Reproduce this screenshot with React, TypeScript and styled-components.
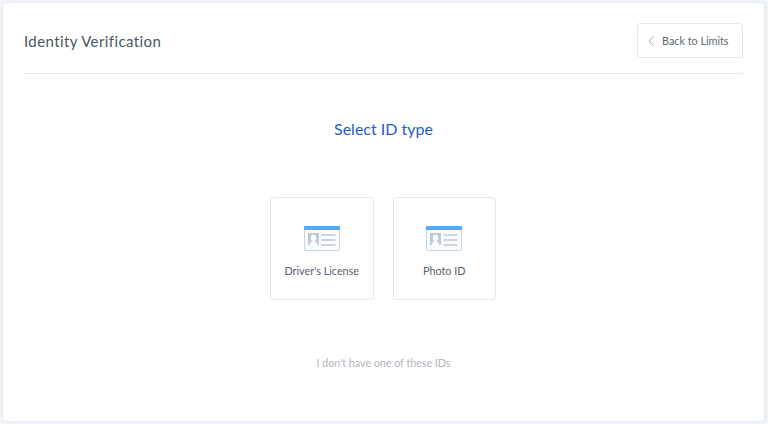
import React from 'react';
import styled, { createGlobalStyle } from 'styled-components';

const GlobalStyle = createGlobalStyle`
  html, body {
    margin: 0;
    height: 100%;
    background: #f1f4f9;
    font-family: 'Lato', 'Open Sans', sans-serif;
    overflow: hidden;
  }
`;

const Page = styled.div`
  box-sizing: border-box;
  width: 768px;
  height: 424px;
  padding: 3px 4px 3px 3px;
`;

const Panel = styled.main`
  box-sizing: border-box;
  height: 418px;
  padding: 20px 21px 0;
  background: #fff;
  border-radius: 2px;
  box-shadow: 0 0 2px rgba(160, 175, 200, 0.45);
`;

const Header = styled.header`
  display: flex;
  align-items: center;
  justify-content: space-between;
  height: 50px;
  border-bottom: 1px solid #e6e9ee;
`;

const Title = styled.h1`
  margin: 0 0 15px;
  font-size: 15px;
  font-weight: 400;
  letter-spacing: 0.4px;
  color: #4a5763;
`;

const BackButton = styled.button`
  display: flex;
  align-items: center;
  gap: 8px;
  box-sizing: border-box;
  width: 106px;
  height: 35px;
  margin-bottom: 15px;
  padding: 0 0 0 10px;
  background: #fff;
  border: 1px solid #e4e7ec;
  border-radius: 3px;
  font-family: inherit;
  font-size: 10.800px;
  color: #5b6873;
`;

const Heading = styled.h2`
  margin: 45px 0 0;
  font-size: 16px;
  line-height: 20px;
  font-weight: 400;
  text-align: center;
  color: #1a5fc4;
`;

const Options = styled.div`
  display: flex;
  justify-content: center;
  gap: 19px;
  margin-top: 58px;
  padding-right: 1px;
`;

const OptionCard = styled.button`
  display: flex;
  flex-direction: column;
  align-items: center;
  box-sizing: border-box;
  width: 103.500px;
  height: 103px;
  padding: 28px 0 0;
  background: #fff;
  border: 1px solid #e6e9ee;
  border-radius: 3px;
  font-family: inherit;
  font-size: 10.800px;
  color: #56626d;
`;

const OptionLabel = styled.span`
  margin-top: 13px;
  line-height: 14px;
`;

const NoIdLink = styled.a`
  display: block;
  margin-top: 56px;
  font-size: 10.700px;
  line-height: 14px;
  text-align: center;
  color: #b0b5bc;
`;

const IdCardIcon = () => (
  <svg width="36" height="25" viewBox="0 0 36 25" fill="none">
    <rect x="0.5" y="0.5" width="35" height="24" rx="1" fill="#fafbfd" stroke="#c4d3e6" />
    <rect x="0" y="0" width="36" height="4" fill="#55aaf6" />
    <path
      fillRule="evenodd"
      d="M4 7h11v12H4zM9.500 8.500c-1.800 0-2.800 1.300-2.800 3.200 0 1.400.5 2.400 1.300 3v.9c-1 .4-2 .9-2.300 3.400h7.600c-.3-2.500-1.300-3-2.300-3.400v-.9c.8-.6 1.300-1.600 1.300-3 0-1.900-1-3.200-2.800-3.200z"
      fill="#bccadb"
    />
    <path d="M17.500 9h14M17.500 14h14M17.500 19h14" stroke="#bccadb" strokeWidth="1.400" />
  </svg>
);

const ChevronLeft = () => (
  <svg width="6" height="10" viewBox="0 0 6 10" fill="none">
    <path d="M5.500 0.500L1 5l4.500 4.500" stroke="#98a2ad" strokeWidth="0.900" />
  </svg>
);

const App = () => (
  <Page>
    <GlobalStyle />
    <Panel>
      <Header>
        <Title>Identity Verification</Title>
        <BackButton>
          <ChevronLeft />
          Back to Limits
        </BackButton>
      </Header>
      <Heading>Select ID type</Heading>
      <Options>
        <OptionCard>
          <IdCardIcon />
          <OptionLabel>Driver's License</OptionLabel>
        </OptionCard>
        <OptionCard>
          <IdCardIcon />
          <OptionLabel>Photo ID</OptionLabel>
        </OptionCard>
      </Options>
      <NoIdLink>I don't have one of these IDs</NoIdLink>
    </Panel>
  </Page>
);

export default App;
